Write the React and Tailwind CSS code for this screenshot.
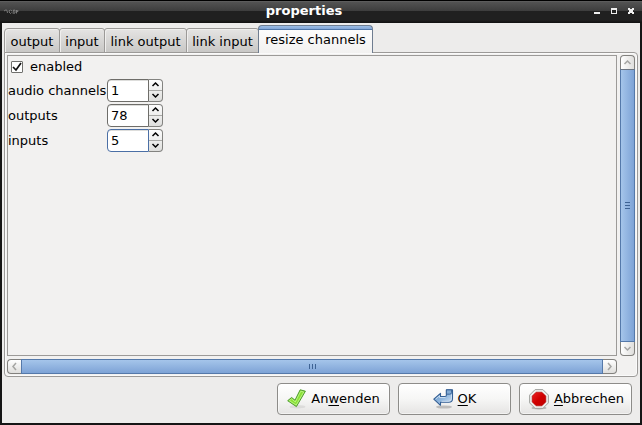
const tabs = [
  { label: 'output', size: 'w-[56px]' },
  { label: 'input', size: 'w-[46px]' },
  { label: 'link output', size: 'w-[83px]' },
  { label: 'link input', size: 'w-[73px]' },
];

function Chevron({ dir, className = 'text-[#a5a5a3]' }) {
  const paths = {
    up: 'M1.5 6 L4.5 3 L7.5 6',
    down: 'M1.5 3 L4.5 6 L7.5 3',
    left: 'M6 1 L3 4.5 L6 8',
    right: 'M3 1 L6 4.5 L3 8',
  };
  return (
    <svg viewBox="0 0 9 9" className={`h-[9px] w-[9px] ${className}`} fill="none" stroke="currentColor" strokeWidth="1.5">
      <path d={paths[dir]} />
    </svg>
  );
}

function TitleBar() {
  return (
    <header className="flex h-[23px] shrink-0 items-center border-t border-black bg-[linear-gradient(#666_0px,#535353_1px,#3d3d3d_10px,#202020_10px,#202020_19px,#101010_22px)] text-white">
      <div className="w-[60px] pl-1">
        <svg width="15" height="6" viewBox="0 0 15 6" fill="none" stroke="#858585" strokeWidth="0.9" className="-mt-px">
          <path d="M0 2 L2 .8 L3 1.5 L3.5 4 M5.5 1 L5 3 L6.5 4.5 L7.5 3.5 M6.5 1 L8 2 M9 4.5 L9.5 1 L11 1.2 L11 4 L9.5 4.5 M12.5 1 V4.5 M12.5 1.5 L14.3 2 L12.5 3.3" />
        </svg>
      </div>
      <h1 className="flex-1 pr-[8px] pb-[3px] text-center text-[13px] leading-[18px] font-bold">properties</h1>
      <svg width="86" height="22" viewBox="0 0 86 22" className="shrink-0" shapeRendering="crispEdges">
        <path fill="#eee" d="M38 11h6v2h-6zM55 7h6v6h-6zM72 7h2v1h2v-1h2v2h-1v2h1v2h-2v-1h-2v1h-2v-2h1v-2h-1z" />
        <path fill="#242424" d="M56 9h4v3h-4z" />
      </svg>
    </header>
  );
}

function Tabs() {
  return (
    <nav className="-mb-px flex h-[28px] items-end text-[13px]">
      {tabs.map((t, i) => (
        <div
          key={t.label}
          className={`${t.size} ${i ? '-ml-px' : 'rounded-tl-[4px]'} flex h-[25px] shrink-0 items-center justify-center rounded-t-[3px] border border-[#9c9a98] bg-linear-to-b from-[#e5e4e3] to-[#c9c8c6] pt-[2px] whitespace-nowrap shadow-[inset_1px_1px_0_#f0efee]`}
        >
          {t.label}
        </div>
      ))}
      <div className="relative -ml-px flex h-[28px] w-[115px] shrink-0 justify-center rounded-t-[4px] border-x border-t border-[#6f7d90] bg-[linear-gradient(#9cbde4_0px,#82a6d6_3px,#4f76a8_3px,#4f76a8_4px,#fcfcfc_4px,#f2f1f0_27px)] pt-[5px] leading-[18px] whitespace-nowrap">
        resize channels
      </div>
    </nav>
  );
}

function Spin({ label, value, focused }) {
  const edge = focused ? 'border-[#4b6fa5]' : 'border-[#6e6d69]';
  return (
    <div className="flex h-[25px] items-start">
      <label className="w-[99px] pt-[3px] text-[13px] leading-[18px] whitespace-nowrap">{label}</label>
      <div className={`flex h-[23px] w-[42px] items-center rounded-l-[4px] border ${edge} bg-white pl-[3px] text-[13px] shadow-[inset_0_1px_0_#dddddb]`}>
        {value}
      </div>
      <div className="flex h-[23px] w-[14px] flex-col items-center rounded-r-[4px] border border-l-0 border-[#838380] bg-linear-to-b from-[#fdfdfd] to-[#dfdfdd]">
        <div className="flex h-[11px] w-full items-start justify-center border-b border-[#a9a9a6]">
          <Chevron dir="up" className="text-black" />
        </div>
        <div className="flex h-[10px] items-start">
          <Chevron dir="down" className="text-black" />
        </div>
      </div>
    </div>
  );
}

function VerticalScroll() {
  return (
    <div className="flex h-[301px] w-[15px] flex-col">
      <div className="flex h-[14px] items-center justify-center rounded-t-[4px] border border-b-0 border-[#82817e] bg-linear-to-r from-white to-[#dfdedc]"><Chevron dir="up" /></div>
      <div className="flex flex-1 flex-col items-center justify-center gap-[2px] border border-[#5579aa] border-t-[#6b7481] bg-linear-to-r from-[#a5c5ea] to-[#7ea3d6]">
        <i className="h-px w-[5px] bg-[#3e6394]" />
        <i className="h-px w-[5px] bg-[#3e6394]" />
        <i className="h-px w-[5px] bg-[#3e6394]" />
      </div>
      <div className="flex h-[14px] items-center justify-center rounded-b-[4px] border border-t-0 border-[#82817e] bg-linear-to-r from-white to-[#dfdedc]"><Chevron dir="down" /></div>
    </div>
  );
}

function HorizontalScroll() {
  return (
    <div className="mt-[3px] flex h-[15px] w-[610px]">
      <div className="flex w-[14px] items-center justify-center rounded-l-[4px] border border-r-0 border-[#82817e] bg-linear-to-b from-white to-[#dfdedc]"><Chevron dir="left" /></div>
      <div className="flex flex-1 items-center justify-center gap-[2px] border border-[#5579aa] bg-linear-to-b from-[#a5c5ea] to-[#7ea3d6]">
        <i className="h-[5px] w-px bg-[#3e6394]" />
        <i className="h-[5px] w-px bg-[#3e6394]" />
        <i className="h-[5px] w-px bg-[#3e6394]" />
      </div>
      <div className="flex w-[14px] items-center justify-center rounded-r-[4px] border border-l-0 border-[#82817e] bg-linear-to-b from-white to-[#dfdedc]"><Chevron dir="right" /></div>
    </div>
  );
}

function ApplyIcon() {
  return (
    <svg width="20" height="20" viewBox="0 0 20 20">
      <ellipse cx="10.5" cy="17.8" rx="8" ry="1.7" fill="#000" opacity=".07" />
      <path d="M.7 11.7 L4.6 8.5 L8 11.2 L13.2 .8 L18.4 2.2 L9.4 17.6 Z" fill="#8ae234" stroke="#4e9a32" strokeWidth="1" strokeLinejoin="round" />
      <path d="M2.4 11.7 L4.6 9.9 L8.3 13 L13.8 2.2 L16.7 3 L9.2 16 Z" fill="none" stroke="#c4f596" strokeWidth=".8" />
    </svg>
  );
}

function OkIcon() {
  return (
    <svg width="21" height="20" viewBox="0 0 21 20">
      <defs>
        <linearGradient id="arrow" x1="0" y1="0" x2="1" y2="1">
          <stop offset="0" stopColor="#5f93c8" />
          <stop offset=".55" stopColor="#94b9df" />
          <stop offset="1" stopColor="#dbe8f5" />
        </linearGradient>
      </defs>
      <ellipse cx="11" cy="18" rx="8" ry="1.6" fill="#000" opacity=".2" />
      <path d="M.8 10.2 L7.5 4.3 V7.5 H12 Q13.4 7.5 13.4 6.3 V.9 H19.5 V9.5 Q19.5 13.3 15.8 13.3 H7.5 V16.3 Z" fill="url(#arrow)" stroke="#345f94" strokeWidth="1.1" strokeLinejoin="round" />
      <path d="M13.4 .9 H18.6 V3.6 Q18.4 5.2 16.7 5.2 H13.4 Z" fill="#82aad3" stroke="#345f94" strokeWidth=".9" />
      <path d="M2.6 10.2 L6.5 6.7 V8.5 H12.5 M8.5 12.3 H15.6 Q18.5 12.2 18.5 9.2 V5.5" fill="none" stroke="#d5e5f4" strokeWidth=".8" />
    </svg>
  );
}

function CancelIcon() {
  return (
    <svg width="20" height="21" viewBox="0 0 20 21">
      <defs>
        <linearGradient id="stop" x1="0" y1="0" x2="1" y2="1">
          <stop offset="0" stopColor="#ec2424" />
          <stop offset=".5" stopColor="#d00000" />
          <stop offset="1" stopColor="#c00000" />
        </linearGradient>
      </defs>
      <ellipse cx="10" cy="18.9" rx="7.5" ry="1.7" fill="#000" opacity=".22" />
      <path d="M6.1 .6 H13.9 L19.4 6.1 V13.9 L13.9 19.4 H6.1 L.6 13.9 V6.1 Z" fill="#eeeeec" stroke="#a0a29e" strokeWidth="1" />
      <path d="M7.1 3.2 H12.9 L16.8 7.1 V12.9 L12.9 16.8 H7.1 L3.2 12.9 V7.1 Z" fill="url(#stop)" stroke="#b00000" strokeWidth=".6" />
    </svg>
  );
}

function Button({ icon, children, spacing = 'gap-[4px]' }) {
  return (
    <button className={`flex h-[32px] w-[113px] items-center justify-center ${spacing} rounded-[4px] border border-[#8d8c89] bg-linear-to-b from-white via-[#f6f6f5] to-[#e5e4e3] text-[13px] whitespace-nowrap shadow-[inset_0_0_0_1px_#ffffff80]`}>
      {icon}
      <span>{children}</span>
    </button>
  );
}

function Key({ children }) {
  return <span className="underline decoration-1 underline-offset-2">{children}</span>;
}

export default function App() {
  return (
    <div className="flex h-[425px] w-[642px] flex-col overflow-hidden bg-[#151515] font-['DejaVu_Sans',sans-serif] text-black">
      <TitleBar />
      <main className="mr-[4px] ml-[2px] h-[400px] w-[638px] bg-[#edeceb] pt-[2px] pl-[2px]">
        <Tabs />
        <section className="h-[325px] w-[634px] rounded-r-[4px] rounded-bl-[4px] border border-[#9c9a98] bg-[#f2f1f0] pt-[2px] pl-[2px] shadow-[inset_0_0_0_1px_#fafafa]">
          <div className="flex gap-[3px]">
            <div className="h-[301px] w-[610px] border border-[#9c9a98] bg-[#f2f1f0]">
              <div className="mb-px flex h-[22px] items-center gap-[7px] pl-[3px] text-[13px]">
                <span className="flex h-[12px] w-[12px] items-center justify-center rounded-[1px] border border-[#70706d] bg-white">
                  <svg width="10" height="10" viewBox="0 0 10 10" fill="none" stroke="#111" strokeWidth="1.7"><path d="M1 5 L4 8 L9 1" /></svg>
                </span>
                <span className="leading-[20px]">enabled</span>
              </div>
              <Spin label="audio channels" value="1" />
              <Spin label="outputs" value="78" />
              <Spin label="inputs" value="5" focused />
            </div>
            <VerticalScroll />
          </div>
          <HorizontalScroll />
        </section>
        <footer className="mt-[6px] flex justify-end gap-[8px] pr-[8px]">
          <Button icon={<ApplyIcon />}>An<Key>w</Key>enden</Button>
          <Button icon={<OkIcon />}><Key>O</Key>K</Button>
          <Button icon={<CancelIcon />} spacing="gap-[5px] pl-[2px]"><Key>A</Key>bbrechen</Button>
        </footer>
      </main>
    </div>
  );
}
